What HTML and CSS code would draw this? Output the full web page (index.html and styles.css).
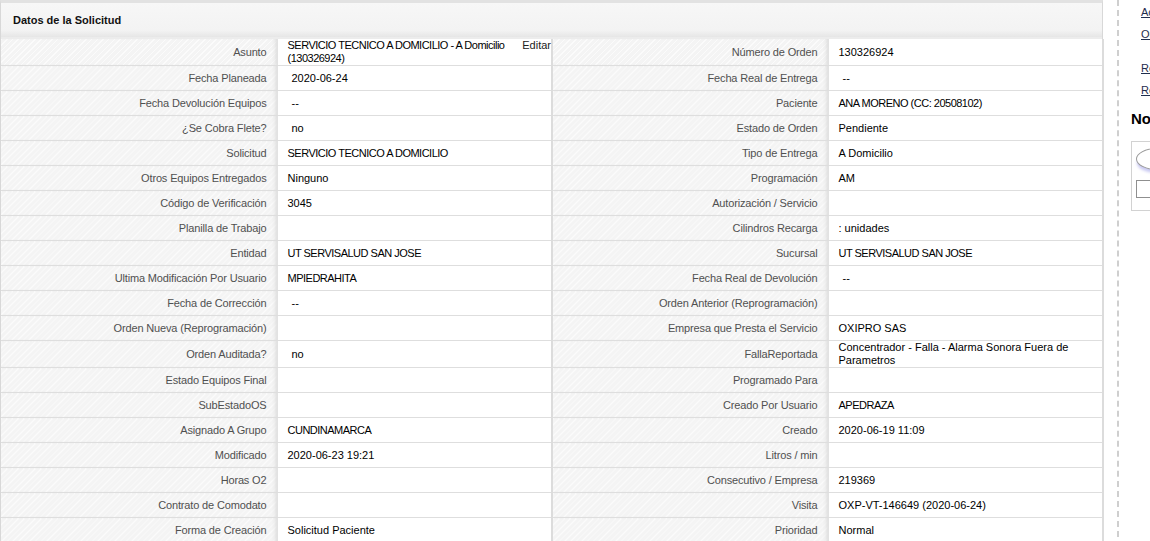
FILE: index.html
```html
<!DOCTYPE html>
<html lang="es">
<head>
    <meta charset="UTF-8">
    <title>Datos de la Solicitud</title>
    <link rel="stylesheet" href="styles.css">
</head>
<body>
<div id="page">

    <!-- panel principal -->
    <div id="panel">
        <div class="panel-header">Datos de la Solicitud</div>
        <table class="datos">
            <colgroup>
                <col class="c-label"><col class="c-valor"><col class="c-label"><col class="c-valor">
            </colgroup>
            <tr class="doble">
                <td class="label">Asunto</td>
                <td class="valor asunto mayus"><a class="editar" href="#">Editar</a>SERVICIO TECNICO A DOMICILIO - A Domicilio (130326924)</td>
                <td class="label">Número de Orden</td>
                <td class="valor">130326924</td>
            </tr>
            <tr>
                <td class="label">Fecha Planeada</td>
                <td class="valor ind">2020-06-24</td>
                <td class="label">Fecha Real de Entrega</td>
                <td class="valor ind">--</td>
            </tr>
            <tr>
                <td class="label">Fecha Devolución Equipos</td>
                <td class="valor ind">--</td>
                <td class="label">Paciente</td>
                <td class="valor mayus">ANA MORENO (CC: 20508102)</td>
            </tr>
            <tr>
                <td class="label">¿Se Cobra Flete?</td>
                <td class="valor ind">no</td>
                <td class="label">Estado de Orden</td>
                <td class="valor">Pendiente</td>
            </tr>
            <tr>
                <td class="label">Solicitud</td>
                <td class="valor mayus">SERVICIO TECNICO A DOMICILIO</td>
                <td class="label">Tipo de Entrega</td>
                <td class="valor">A Domicilio</td>
            </tr>
            <tr>
                <td class="label">Otros Equipos Entregados</td>
                <td class="valor">Ninguno</td>
                <td class="label">Programación</td>
                <td class="valor">AM</td>
            </tr>
            <tr>
                <td class="label">Código de Verificación</td>
                <td class="valor">3045</td>
                <td class="label">Autorización / Servicio</td>
                <td class="valor"></td>
            </tr>
            <tr>
                <td class="label">Planilla de Trabajo</td>
                <td class="valor"></td>
                <td class="label">Cilindros Recarga</td>
                <td class="valor">: unidades</td>
            </tr>
            <tr>
                <td class="label">Entidad</td>
                <td class="valor mayus">UT SERVISALUD SAN JOSE</td>
                <td class="label">Sucursal</td>
                <td class="valor mayus">UT SERVISALUD SAN JOSE</td>
            </tr>
            <tr>
                <td class="label">Ultima Modificación Por Usuario</td>
                <td class="valor mayus">MPIEDRAHITA</td>
                <td class="label">Fecha Real de Devolución</td>
                <td class="valor ind">--</td>
            </tr>
            <tr>
                <td class="label">Fecha de Corrección</td>
                <td class="valor ind">--</td>
                <td class="label">Orden Anterior (Reprogramación)</td>
                <td class="valor"></td>
            </tr>
            <tr>
                <td class="label">Orden Nueva (Reprogramación)</td>
                <td class="valor"></td>
                <td class="label">Empresa que Presta el Servicio</td>
                <td class="valor">OXIPRO SAS</td>
            </tr>
            <tr class="doble">
                <td class="label">Orden Auditada?</td>
                <td class="valor ind">no</td>
                <td class="label">FallaReportada</td>
                <td class="valor">Concentrador - Falla - Alarma Sonora Fuera de Parametros</td>
            </tr>
            <tr>
                <td class="label">Estado Equipos Final</td>
                <td class="valor"></td>
                <td class="label">Programado Para</td>
                <td class="valor"></td>
            </tr>
            <tr>
                <td class="label">SubEstadoOS</td>
                <td class="valor"></td>
                <td class="label">Creado Por Usuario</td>
                <td class="valor mayus">APEDRAZA</td>
            </tr>
            <tr>
                <td class="label">Asignado A Grupo</td>
                <td class="valor mayus">CUNDINAMARCA</td>
                <td class="label">Creado</td>
                <td class="valor">2020-06-19 11:09</td>
            </tr>
            <tr>
                <td class="label">Modificado</td>
                <td class="valor">2020-06-23 19:21</td>
                <td class="label">Litros / min</td>
                <td class="valor"></td>
            </tr>
            <tr>
                <td class="label">Horas O2</td>
                <td class="valor"></td>
                <td class="label">Consecutivo / Empresa</td>
                <td class="valor">219369</td>
            </tr>
            <tr>
                <td class="label">Contrato de Comodato</td>
                <td class="valor"></td>
                <td class="label">Visita</td>
                <td class="valor">OXP-VT-146649 (2020-06-24)</td>
            </tr>
            <tr>
                <td class="label">Forma de Creación</td>
                <td class="valor">Solicitud Paciente</td>
                <td class="label">Prioridad</td>
                <td class="valor">Normal</td>
            </tr>
        </table>
    </div>

    <!-- barra lateral -->
    <div id="lateral">
        <a class="lat-link" href="#">Acciones</a>
        <a class="lat-link" href="#">Orden</a>
        <a class="lat-link sep" href="#">Reportes</a>
        <a class="lat-link" href="#">Recibos</a>
        <h3 class="lat-titulo">Notas</h3>
        <div class="lat-caja">
            <div class="boton-oval"></div>
            <div class="check"></div>
        </div>
    </div>

</div>
</body>
</html>
```

FILE: styles.css
```css
body {
    margin: 0;
    padding: 0;
    font-family: "Liberation Sans", Arial, sans-serif;
    font-size: 11px;
    background: #ffffff;
    overflow: hidden;
}

#page {
    display: flex;
    align-items: flex-start;
}

#panel {
    width: 1101px;
    flex: none;
    border-top: 3px solid #e2e2e2;
    border-left: 1px solid #d8d8d8;
    border-right: 1px solid #d8d8d8;
}

.panel-header {
    height: 34px;
    line-height: 35px;
    padding-left: 12px;
    font-weight: bold;
    color: #111;
    background: linear-gradient(#f7f7f7, #f3f3f3 80%, #e6e6e6);
    border-bottom: 2px solid #ececec;
}

.datos {
    width: 1101px;
    table-layout: fixed;
    border-collapse: collapse;
}

.c-label { width: 276px; }
.c-valor { width: 275px; }

.datos td {
    height: 24px;
    padding: 0 10px;
    border-bottom: 1px solid #dedede;
    vertical-align: middle;
    line-height: 13px;
}

.datos tr.doble td {
    height: 26px;
}

.label {
    text-align: right;
    color: #505050;
    letter-spacing: -0.15px;
    background-color: #f4f4f4;
    background-image: repeating-linear-gradient(135deg, rgba(255,255,255,0.6) 0 1px, transparent 1px 4px);
    box-shadow: inset -4px 0 4px -3px #d6d6d6;
    border-right: 1px solid #e2e2e2;
}

.valor {
    color: #000;
    background: #fff;
    border-right: 2px solid #dcdcdc;
}

/* las mayusculas salen mas estrechas en el original */
.mayus {
    letter-spacing: -0.5px;
}

.ind {
    padding-left: 14px !important;
}

.datos td.asunto {
    padding-right: 0;
}

.editar {
    float: right;
    color: #222;
    letter-spacing: 0;
    text-decoration: none;
}

#lateral {
    flex: 1;
    margin-left: 14px;
    padding: 6px 0 0 12px;
    min-height: 541px;
    border-left: 2px dashed #cfcfcf;
    overflow: hidden;
    white-space: nowrap;
}

.lat-link {
    display: block;
    margin-left: 10px;
    margin-bottom: 9px;
    color: #1f2d4d;
    font-size: 11px;
    line-height: 13px;
}

.lat-link.sep {
    margin-top: 21px;
}

.lat-titulo {
    margin: 13px 0 14px 0;
    font-size: 15px;
    color: #000;
}

.lat-caja {
    width: 60px;
    height: 62px;
    padding: 6px 0 0 4px;
    border: 1px solid #d2d2d2;
}

.boton-oval {
    width: 40px;
    height: 20px;
    border: 1px solid #9a9a9a;
    border-radius: 50%;
    background: #fff;
    box-shadow: 0 4px 3px -1px #c9c9f2;
}

.check {
    width: 16px;
    height: 16px;
    margin-top: 10px;
    border: 1px solid #8f8f8f;
    background: #fff;
}
```
